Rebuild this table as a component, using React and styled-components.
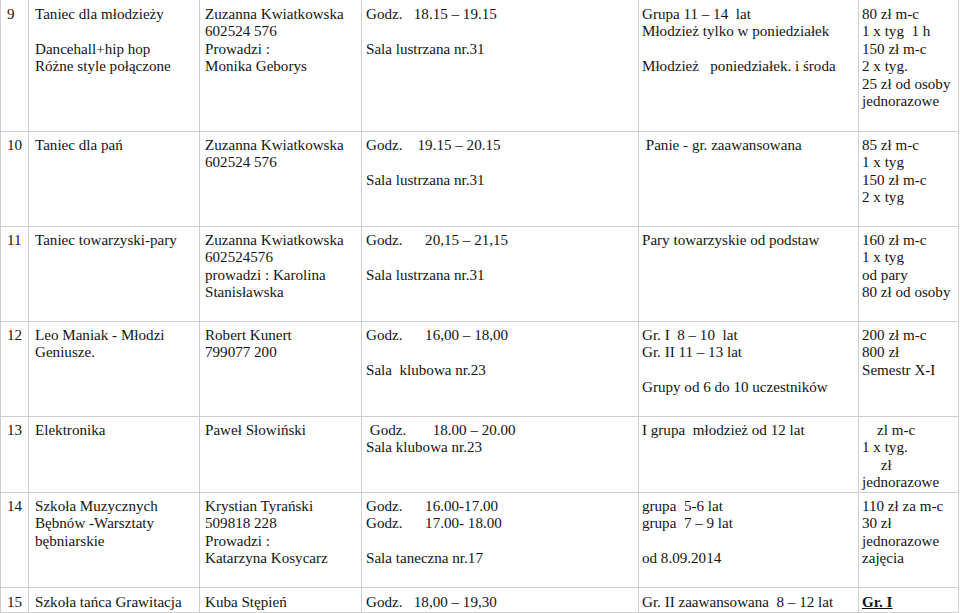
import React from "react";
import styled, { createGlobalStyle } from "styled-components";

const Global = createGlobalStyle`
  html, body { margin: 0; padding: 0; background: #ffffff; }
  body { overflow: hidden; }
`;

const COLS = [28, 171, 162, 277, 220, 100];
const PADS = [6, 6, 5, 4, 3, 3];

const Table = styled.div`
  width: 959px;
  border-left: 1px solid #cfcfcf;
  box-sizing: border-box;
  font-family: "Liberation Serif", "Times New Roman", serif;
  font-size: 15.1px;
  line-height: 17.4px;
  color: #141414;
`;

const Row = styled.div`
  display: grid;
  grid-template-columns: ${COLS.map((c) => c + "px").join(" ")};
  height: ${(p) => p.$h}px;
  border-bottom: 1px solid #cfcfcf;
  box-sizing: content-box;
`;

const Cell = styled.div`
  border-right: 1px solid #cfcfcf;
  padding: ${(p) => p.$top}px 0 0 ${(p) => p.$pad}px;
  overflow: hidden;
  box-sizing: border-box;
`;

const Line = styled.div`
  white-space: pre;
  height: 17.4px;
`;

const Strong = styled.span`
  font-weight: bold;
  text-decoration: underline;
`;

const rows = [
  {
    h: 131,
    top: 6,
    cells: [
      ["9"],
      ["Taniec dla młodzieży", "", "Dancehall+hip hop", "Różne style połączone"],
      ["Zuzanna Kwiatkowska", "602524 576", "Prowadzi :", "Monika Geborys"],
      ["Godz.   18.15 – 19.15", "", "Sala lustrzana nr.31"],
      ["Grupa 11 – 14  lat", "Młodzież tylko w poniedziałek", "", "Młodzież   poniedziałek. i środa"],
      ["80 zł m-c", "1 x tyg  1 h", "150 zł m-c", "2 x tyg.", "25 zł od osoby", "jednorazowe"],
    ],
  },
  {
    h: 94,
    top: 5,
    cells: [
      ["10"],
      ["Taniec dla pań"],
      ["Zuzanna Kwiatkowska", "602524 576"],
      ["Godz.    19.15 – 20.15", "", "Sala lustrzana nr.31"],
      [" Panie - gr. zaawansowana"],
      ["85 zł m-c", "1 x tyg", "150 zł m-c", "2 x tyg"],
    ],
  },
  {
    h: 94,
    top: 5,
    cells: [
      ["11"],
      ["Taniec towarzyski-pary"],
      ["Zuzanna Kwiatkowska", "602524576", "prowadzi : Karolina", "Stanisławska"],
      ["Godz.      20,15 – 21,15", "", "Sala lustrzana nr.31"],
      ["Pary towarzyskie od podstaw"],
      ["160 zł m-c", "1 x tyg", "od pary", "80 zł od osoby"],
    ],
  },
  {
    h: 94,
    top: 5,
    cells: [
      ["12"],
      ["Leo Maniak - Młodzi", "Geniusze."],
      ["Robert Kunert", "799077 200"],
      ["Godz.      16,00 – 18,00", "", "Sala  klubowa nr.23"],
      ["Gr. I  8 – 10  lat", "Gr. II 11 – 13 lat", "", "Grupy od 6 do 10 uczestników"],
      ["200 zł m-c", "800 zł", "Semestr X-I"],
    ],
  },
  {
    h: 75,
    top: 5,
    cells: [
      ["13"],
      ["Elektronika"],
      ["Paweł Słowiński"],
      [" Godz.       18.00 – 20.00", "Sala klubowa nr.23"],
      ["I grupa  młodzież od 12 lat"],
      ["    zl m-c", "1 x tyg.", "     zł", "jednorazowe"],
    ],
  },
  {
    h: 94,
    top: 5,
    cells: [
      ["14"],
      ["Szkoła Muzycznych", "Bębnów -Warsztaty", "bębniarskie"],
      ["Krystian Tyrański", "509818 228", "Prowadzi :", "Katarzyna Kosycarz"],
      ["Godz.      16.00-17.00", "Godz.      17.00- 18.00", "", "Sala taneczna nr.17"],
      ["grupa  5-6 lat", "grupa  7 – 9 lat", "", "od 8.09.2014"],
      ["110 zł za m-c", "30 zł", "jednorazowe", "zajęcia"],
    ],
  },
  {
    h: 24,
    top: 6,
    cells: [
      ["15"],
      ["Szkoła tańca Grawitacja"],
      ["Kuba Stępień"],
      ["Godz.   18,00 – 19,30"],
      ["Gr. II zaawansowana  8 – 12 lat"],
      [<Strong key="g">Gr. I</Strong>],
    ],
  },
];

export default function App() {
  return (
    <>
      <Global />
      <Table>
        {rows.map((r, ri) => (
          <Row key={ri} $h={r.h}>
            {r.cells.map((lines, ci) => (
              <Cell key={ci} $pad={PADS[ci]} $top={r.top}>
                {lines.map((l, li) => (
                  <Line key={li}>{l === "" ? "\u00a0" : l}</Line>
                ))}
              </Cell>
            ))}
          </Row>
        ))}
      </Table>
    </>
  );
}
